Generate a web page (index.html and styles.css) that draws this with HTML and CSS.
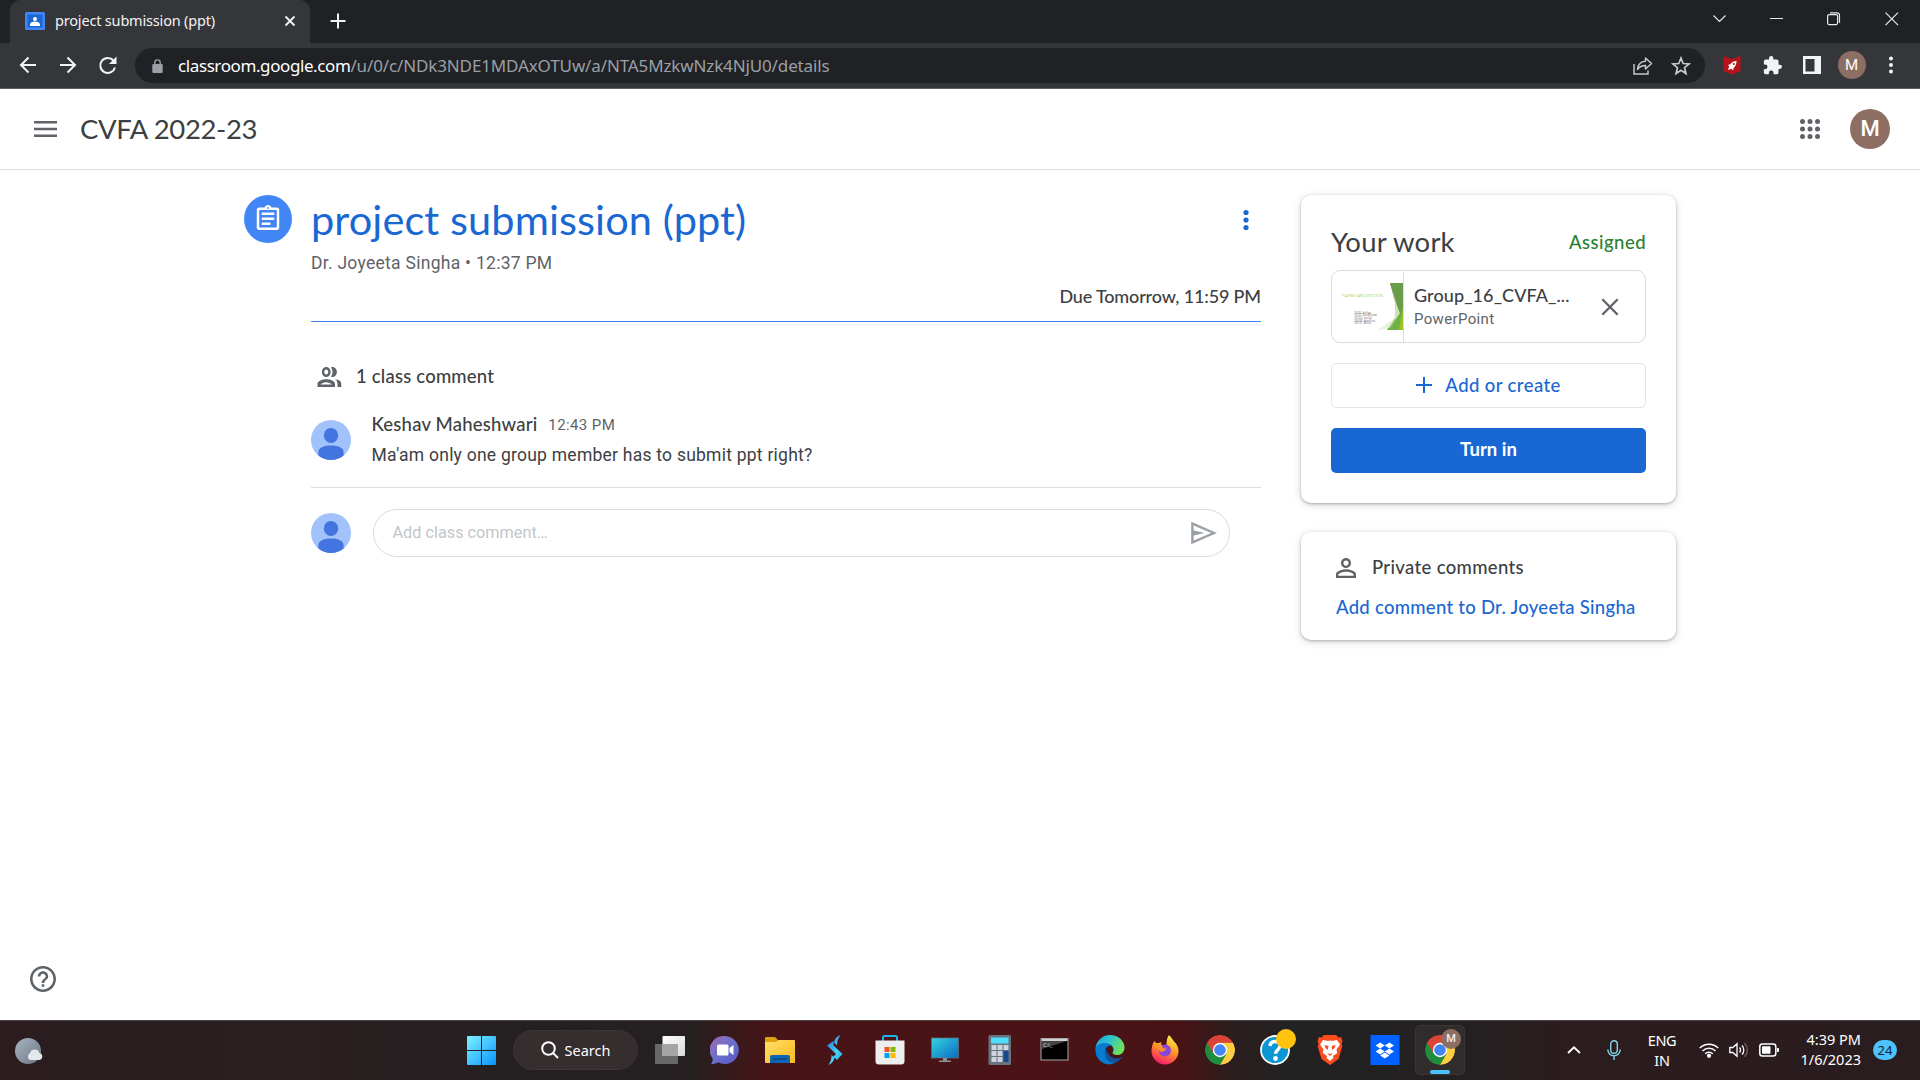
FILE: index.html
```html
<!DOCTYPE html>
<html lang="en">
<head>
<meta charset="utf-8">
<title>project submission (ppt)</title>
<link rel="stylesheet" href="styles.css">
</head>
<body>
<svg class="defs" width="0" height="0" aria-hidden="true">
  <defs>
    <symbol id="person" viewBox="0 0 40 40"><circle cx="20" cy="20" r="20" fill="#a1c2fa"/><ellipse cx="20" cy="15.4" rx="7.2" ry="7.5" fill="#4374e0"/><path d="M7.4 35.5V32c0-4.600 6.500-6.500 12.600-6.500s12.600 1.900 12.600 6.500v3.500A20 20 0 0 1 20 40 20 20 0 0 1 7.400 35.500z" fill="#4374e0"/></symbol>
    <symbol id="chrome" viewBox="0 0 48 48"><path d="M3.200 12A24 24 0 0 1 44.800 12H24z" fill="#db4437"/><path d="M3.200 12A24 24 0 0 0 24 48L34.400 30 24 24z" fill="#1e8e3e"/><path d="M44.800 12A24 24 0 0 1 24 48L34.400 30 24 12z" fill="#ffcd40"/><path d="M3.200 12L13.600 30 24 12H44.800L42 8 24 0 8 6z" fill="#db4437"/><circle cx="24" cy="24" r="11.500" fill="#fff"/><circle cx="24" cy="24" r="9.300" fill="#4285f4"/></symbol>
    <clipPath id="disc"><circle cx="24" cy="24" r="24"/></clipPath>
    <linearGradient id="gwin" x1="0" y1="0" x2="1" y2="1"><stop offset="0" stop-color="#7df2ff"/><stop offset="1" stop-color="#0a93fb"/></linearGradient>
    <linearGradient id="gchat" x1="0" y1="0" x2="1" y2="1"><stop offset="0" stop-color="#a16bb0"/><stop offset=".5" stop-color="#6b6fcf"/><stop offset="1" stop-color="#5558c4"/></linearGradient>
    <linearGradient id="gfold" x1="0" y1="0" x2="1" y2="1"><stop offset="0" stop-color="#ffdf6b"/><stop offset="1" stop-color="#fbb91a"/></linearGradient>
    <linearGradient id="gbolt" x1="0" y1="0" x2="1" y2="1"><stop offset="0" stop-color="#2f6fe4"/><stop offset=".6" stop-color="#42d4f4"/><stop offset="1" stop-color="#2f8fe0"/></linearGradient>
    <linearGradient id="gmon" x1="0" y1="0" x2="1" y2="1"><stop offset="0" stop-color="#35d2e0"/><stop offset="1" stop-color="#0a6cc4"/></linearGradient>
    <linearGradient id="gedge" x1="0" y1="0" x2="1" y2=".4"><stop offset="0" stop-color="#1ba0df"/><stop offset=".5" stop-color="#2cc3d2"/><stop offset="1" stop-color="#6be25a"/></linearGradient>
    <linearGradient id="gfox" x1=".7" y1="0" x2=".3" y2="1"><stop offset="0" stop-color="#fff14a"/><stop offset=".45" stop-color="#ff9a26"/><stop offset="1" stop-color="#f5156c"/></linearGradient>
    <linearGradient id="gtv" x1="0" y1="0" x2="1" y2="1"><stop offset="0" stop-color="#fff"/><stop offset="1" stop-color="#d9d9d9"/></linearGradient>
    <linearGradient id="gmoon" x1="0" y1="0" x2="1" y2="1"><stop offset="0" stop-color="#a9b4c2"/><stop offset="1" stop-color="#6c7683"/></linearGradient>
  </defs>
</svg>

<header class="browser">
  <div class="tabstrip">
    <div class="tab">
      <svg class="favicon" viewBox="0 0 20 18"><rect width="20" height="18" rx="1.500" fill="#4285f4"/><rect x="2.500" y="2.500" width="15" height="13" fill="#1967d2"/><circle cx="10" cy="7" r="2" fill="#fff"/><path d="M5 14v-1.500c0-2 2.500-3 5-3s5 1 5 3V14z" fill="#fff"/></svg>
      <span class="tab-title">project submission (ppt)</span>
      <svg class="tab-close" viewBox="0 0 12 12"><path d="M1.500 1.500l9 9M10.500 1.500l-9 9" stroke="#f1f3f4" stroke-width="1.900"/></svg>
    </div>
    <svg class="new-tab" viewBox="0 0 16 16"><path d="M8 .5v15M.5 8h15" stroke="#f1f3f4" stroke-width="2"/></svg>
    <svg class="window-buttons" viewBox="0 0 186 14" fill="none" stroke="#e8eaed" stroke-width="1.200"><path d="M.5 3.500l6 6 6-6M57 6.500h13"/><rect x="114.600" y="2.600" width="10" height="10" rx="1.500"/><path d="M117 .8h7a2.500 2.500 0 0 1 2.500 2.500v7.500M172.500.6l12.500 12.500M185 .6L172.500 13.100"/></svg>
  </div>
  <div class="toolbar">
    <svg class="nav" viewBox="0 0 98 20" fill="none" stroke="#f1f3f4" stroke-width="2"><path d="M17 10H2M9.500 2.500L2 10l7.500 7.500M41 10h15M48.500 2.500L56 10l-7.500 7.500M94.500 5.500A7.500 7.500 0 1 0 96 12.500"/><path d="M97.500 1.500v7.500H90z" fill="#f1f3f4" stroke="none"/></svg>
    <div class="omnibox">
      <svg class="lock" viewBox="0 0 11 14"><rect x=".3" y="5" width="10.400" height="9" rx="1.200" fill="#9aa0a6"/><path d="M2.800 5.500V3.600a2.700 2.700 0 0 1 5.400 0v1.900" fill="none" stroke="#9aa0a6" stroke-width="1.400"/></svg>
      <span class="url"><span class="host">classroom.google.com</span><span class="path">/u/0/c/NDk3NDE1MDAxOTUw/a/NTA5MzkwNzk4NjU0/details</span></span>
      <svg class="share" viewBox="0 0 20 20" fill="none" stroke="#c4c7c5" stroke-width="1.500"><path d="M1 8v10h14v-3.500"/><path d="M4.500 13.500c.5-5 3.500-8 8-8.200V2l6 5.500-6 5.500V9.500c-3.500 0-6 1.200-8 4z" stroke-linejoin="round"/></svg>
      <svg class="star" viewBox="0 0 20 20"><path d="M10 2l2.200 5.500 5.900.4-4.600 3.800 1.500 5.800L10 14.300l-5 3.200 1.500-5.800L1.900 7.900l5.900-.4z" fill="none" stroke="#c8cacc" stroke-width="1.700"/></svg>
    </div>
    <div class="extensions">
      <svg width="18" height="20" viewBox="0 0 18 20"><path d="M.5 1L9 4l8.500-3v15L9 19.500.5 16z" fill="#b71319"/><path d="M13.500 6c-3 .2-5 1.500-6 3.300l-2.700.7 1.500 1.300L5 15l3.500-1.300L10 15.500l.7-2.700c1.600-1.300 2.800-3.300 2.800-6.800z" fill="#fff"/><circle cx="10.800" cy="9" r="1" fill="#b71319"/></svg>
      <svg width="19" height="19" viewBox="1 1 22 22"><path d="M20.500 11H19V7a2 2 0 0 0-2-2h-4V3.500a2.500 2.500 0 0 0-5 0V5H4a2 2 0 0 0-2 2v3.800h1.500a2.700 2.700 0 0 1 0 5.400H2V20a2 2 0 0 0 2 2h3.800v-1.500a2.700 2.700 0 0 1 5.400 0V22H17a2 2 0 0 0 2-2v-4h1.500a2.500 2.500 0 0 0 0-5z" fill="#f1f3f4"/></svg>
      <svg width="18" height="18" viewBox="0 0 18 18"><path fill="#f1f3f4" fill-rule="evenodd" d="M0 0h18v18H0zM2.500 3v12.500H11.500V3z"/></svg>
      <span class="avatar small">M</span>
      <svg width="4" height="18" viewBox="0 0 4 18" fill="#f1f3f4"><circle cx="2" cy="2.500" r="2"/><circle cx="2" cy="9" r="2"/><circle cx="2" cy="15.500" r="2"/></svg>
    </div>
  </div>
</header>

<nav class="appbar">
  <svg class="menu" viewBox="0 0 23 16"><path d="M0 1.200h23M0 8h23M0 14.800h23" stroke="#5f6368" stroke-width="2.400"/></svg>
  <span class="course">CVFA 2022-23</span>
  <svg class="apps" viewBox="0 0 20 20" fill="#5f6368"><circle cx="2.500" cy="2.500" r="2.500"/><circle cx="10" cy="2.500" r="2.500"/><circle cx="17.500" cy="2.500" r="2.500"/><circle cx="2.500" cy="10" r="2.500"/><circle cx="10" cy="10" r="2.500"/><circle cx="17.500" cy="10" r="2.500"/><circle cx="2.500" cy="17.500" r="2.500"/><circle cx="10" cy="17.500" r="2.500"/><circle cx="17.500" cy="17.500" r="2.500"/></svg>
  <span class="avatar">M</span>
</nav>

<main class="page">
  <svg class="badge" viewBox="0 0 48 48"><circle cx="24" cy="24" r="24" fill="#4285f4"/><path transform="translate(9 8.700) scale(1.250)" d="M7 15h7v2H7zm0-4h10v2H7zm0-4h10v2H7zm12-4h-4.180C14.400 1.840 13.300 1 12 1c-1.300 0-2.400.84-2.820 2H5c-.14 0-.27.010-.4.040-.39.080-.74.280-1.010.55-.18.180-.33.400-.43.640-.1.230-.16.490-.16.770v14c0 .27.060.54.160.78s.25.450.43.640c.27.270.62.470 1.010.55.130.020.26.030.4.030h14c1.100 0 2-.9 2-2V5c0-1.100-.9-2-2-2zm-7-.25c.41 0 .75.340.75.750s-.34.750-.75.750-.75-.34-.75-.75.340-.75.750-.75zM19 19H5V5h14v14z" fill="#fff"/></svg>
  <section class="assignment">
    <div class="title-row">
      <h1>project submission (ppt)</h1>
      <svg width="6" height="22" viewBox="0 0 6 22" fill="#1967d2"><circle cx="3" cy="3.500" r="2.600"/><circle cx="3" cy="11" r="2.600"/><circle cx="3" cy="18.500" r="2.600"/></svg>
    </div>
    <div class="byline">Dr. Joyeeta Singha • 12:37 PM</div>
    <div class="due">Due Tomorrow, 11:59 PM</div>
    <div class="comment-head">
      <svg width="30" height="30" viewBox="0 0 24 24" fill="#5f6368"><path d="M9 13.750c-2.340 0-7 1.170-7 3.500V20h14v-2.750c0-2.330-4.660-3.500-7-3.500zM4.340 18c.84-.58 2.870-1.750 4.660-1.750s3.820 1.170 4.660 1.750H4.340zM9 12c1.930 0 3.500-1.800 3.500-4S10.930 4 9 4 5.500 5.800 5.500 8s1.570 4 3.500 4zm0-6c.9 0 1.600.9 1.600 2s-.7 2-1.600 2-1.600-.9-1.600-2S8.100 6 9 6zm7.040 7.810c1.160.84 1.960 1.960 1.960 3.440V20h3v-2.750c0-2.020-2.500-3.170-4.960-3.440zM14 12c1.930 0 3.500-1.800 3.500-4S15.930 4 14 4c-.4 0-.9.100-1.200.300C13.600 5.400 14 6.600 14 8s-.4 2.600-1.200 3.700c.3.200.8.300 1.200.300z"/></svg>
      <span class="label">1 class comment</span>
    </div>
    <div class="comment">
      <svg width="40" height="40"><use href="#person"/></svg>
      <div class="comment-text">
        <div class="who"><span class="label">Keshav Maheshwari</span><span class="time">12:43 PM</span></div>
        <div class="message">Ma'am only one group member has to submit ppt right?</div>
      </div>
    </div>
    <div class="composer">
      <svg width="40" height="40"><use href="#person"/></svg>
      <div class="field"><span class="hint">Add class comment…</span>
        <svg width="26" height="22" viewBox="0 0 26 22"><path d="M1.400 1.600L23 11 1.400 20.400z" fill="none" stroke="#9aa0a6" stroke-width="2.400"/><path d="M2 8.300L13.500 11 2 13.700z" fill="#9aa0a6"/></svg>
      </div>
    </div>
  </section>
  <aside class="side">
    <div class="card work">
      <div class="work-head"><span class="work-title">Your work</span><span class="status">Assigned</span></div>
      <div class="file">
        <div class="thumb"><svg width="62" height="47" viewBox="0 0 62 47"><path d="M49 0h13v47H46l11-17z" fill="#70a14f"/><path d="M49 0l10 31-5 7V20z" fill="#c5dd9f"/><path d="M49 0h13v22l-3 9z" fill="#6a9c49"/><path d="M46 47l13-17 3 3v14z" fill="#6fb245"/><path d="M62 25v22h-4z" fill="#9bc41f"/><path d="M36 47l17-11 2-14 4 8-10 15z" fill="#dbe9c4" opacity=".6"/><text x="1" y="14" font-size="4.200" textLength="41" lengthAdjust="spacingAndGlyphs" fill="#93d15a">PLAYING CARD DETECTION</text><g font-size="2.600" fill="#555"><text x="13" y="30.500" textLength="17" lengthAdjust="spacingAndGlyphs">19UCC001 - Aditi Gupta</text><text x="13" y="33.200" textLength="23" lengthAdjust="spacingAndGlyphs">19UCC023 - Keshav Maheshwari</text><text x="13" y="35.900" textLength="18" lengthAdjust="spacingAndGlyphs">19UCC054 - Tanya Sethi</text><text x="13" y="38.600" textLength="21" lengthAdjust="spacingAndGlyphs">19UEC066 - Aman Meena</text><text x="13" y="41.300" textLength="17" lengthAdjust="spacingAndGlyphs">19UCC101 - Rahul Jain</text></g></svg></div>
        <div class="file-text"><span class="file-name">Group_16_CVFA_...</span><span class="file-type">PowerPoint</span></div>
        <svg class="remove" width="18" height="18" viewBox="0 0 18 18"><path d="M1.300 1.300l15.400 15.400M16.700 1.300L1.300 16.700" stroke="#5f6368" stroke-width="2.300"/></svg>
      </div>
      <div class="button outline"><svg width="16" height="16" viewBox="0 0 16 16"><path d="M8 0v16M0 8h16" stroke="#1967d2" stroke-width="2"/></svg><span>Add or create</span></div>
      <div class="button primary"><span>Turn in</span></div>
    </div>
    <div class="card private">
      <div class="private-head"><svg width="20" height="20" viewBox="4 4 16 16" fill="#5f6368"><path d="M12 5.900c1.160 0 2.100.940 2.100 2.100s-.94 2.100-2.100 2.100S9.900 9.160 9.900 8s.94-2.100 2.100-2.100m0 9c2.970 0 6.100 1.460 6.100 2.100v1.100H5.900V17c0-.64 3.130-2.100 6.100-2.100M12 4C9.790 4 8 5.790 8 8s1.790 4 4 4 4-1.790 4-4-1.790-4-4-4zm0 9c-2.670 0-8 1.340-8 4v3h16v-3c0-2.660-5.330-4-8-4z"/></svg><span class="label">Private comments</span></div>
      <div class="private-link">Add comment to Dr. Joyeeta Singha</div>
    </div>
  </aside>
</main>

<div class="help"><svg width="26" height="26" viewBox="2 2 20 20" fill="#5f6368"><path d="M11 18h2v-2h-2v2zm1-16C6.480 2 2 6.480 2 12s4.480 10 10 10 10-4.480 10-10S17.520 2 12 2zm0 18c-4.410 0-8-3.590-8-8s3.590-8 8-8 8 3.590 8 8-3.590 8-8 8zm0-14c-2.210 0-4 1.790-4 4h2c0-1.100.9-2 2-2s2 .9 2 2c0 2-3 1.750-3 5h2c0-2.250 3-2.500 3-5 0-2.210-1.790-4-4-4z"/></svg></div>

<footer class="taskbar">
  <svg class="weather" viewBox="0 0 28 26"><circle cx="13" cy="13" r="13" fill="url(#gmoon)"/><path d="M15 22a4 4 0 0 1 0-7 5 5 0 0 1 9.500 0 3.600 3.600 0 0 1 0 7z" fill="#e4e8ed"/></svg>
  <div class="launchers">
    <svg class="start" viewBox="0 0 29 29"><path d="M1 0h13v14H0V1a1 1 0 0 1 1-1zM15 0h13a1 1 0 0 1 1 1v13H15zM0 15h14v14H1a1 1 0 0 1-1-1zM15 15h14v13a1 1 0 0 1-1 1H15z" fill="url(#gwin)"/></svg>
    <div class="search"><svg width="18" height="18" viewBox="0 0 18 18" fill="none" stroke="#fff" stroke-width="2"><circle cx="7.500" cy="7.500" r="6.300"/><path d="M12 12l5 5"/></svg><span class="search-text">Search</span></div>
    <div class="slot"><svg viewBox="0 0 30 30"><rect y="9" width="23" height="20" rx="1" fill="#686868"/><rect x="7.500" y="1" width="22.500" height="20" rx="1" fill="url(#gtv)"/><path d="M7.500 9H23v12H7.500z" fill="#a5a5a5"/></svg></div>
    <div class="slot"><svg viewBox="0 0 30 30"><path d="M15 1a14 14 0 1 1-6.500 26.500C6.500 28.500 3 29.200 1 29c1-1.500 1.800-3 1.700-5.500A14 14 0 0 1 15 1z" fill="url(#gchat)"/><rect x="7" y="9.500" width="11.500" height="11" rx="1.500" fill="#fff"/><path d="M19.500 13l4-3v10l-4-3z" fill="#fff"/></svg></div>
    <div class="slot"><svg viewBox="0 0 30 30"><path d="M0 3a1 1 0 0 1 1-1h9l3 3v4H0z" fill="#dfa010"/><path d="M0 7h11l2.500-2H29a1 1 0 0 1 1 1v22H1a1 1 0 0 1-1-1z" fill="url(#gfold)"/><path d="M5 28v-6a2 2 0 0 1 2-2h16a2 2 0 0 1 2 2v6z" fill="#0c66b5"/><path d="M8 24h14" stroke="#0a3f78" stroke-width="1.300"/></svg></div>
    <div class="slot"><svg viewBox="0 0 30 30"><path d="M20.500 0c-4 1.500-6 4-6.500 7.500l3 3c0-4 1-7 3.500-10.500zM7 10.500l6.500-4.500v4.500L22.500 19 17 25l-3.500-3.500L16 19zM8.500 30c4-2 5.500-4.500 6-7.500l-3-2.500c0 4-.8 6.500-3 10z" fill="url(#gbolt)"/></svg></div>
    <div class="slot"><svg viewBox="0 0 30 30"><path d="M8 7V2.500A1.500 1.500 0 0 1 9.500 1h11A1.500 1.500 0 0 1 22 2.500V7" fill="none" stroke="#20b0ea" stroke-width="2"/><path d="M.5 5.500h29V26a3.500 3.500 0 0 1-3.500 3.500H4A3.500 3.500 0 0 1 .5 26z" fill="#eee"/><path d="M9.500 12h5v5h-5z" fill="#f25022"/><path d="M15.500 12h5v5h-5z" fill="#7fba00"/><path d="M9.500 18h5v5h-5z" fill="#00a4ef"/><path d="M15.500 18h5v5h-5z" fill="#ffb900"/></svg></div>
    <div class="slot"><svg viewBox="0 0 30 30"><rect x="1.500" y="3" width="27" height="20" fill="url(#gmon)" stroke="#5f6f78" stroke-width=".8"/><path d="M13 23h4v2.500h4V27H9v-1.500h4z" fill="#8c9296"/></svg></div>
    <div class="slot"><svg viewBox="0 0 30 30"><rect x="3.500" width="22.500" height="30" rx="1.500" fill="#68737f"/><rect x="6" y="2.500" width="17.500" height="6" fill="#4fdcf8"/><path d="M6.500 10h5v5h-5zm6 0h5v5h-5zm6 0h5v5h-5zm-12 6h5v5h-5zm6 0h5v5h-5zm-6 6h5v5h-5zm6 0h5v5h-5z" fill="#cbd4de"/><path d="M18.500 16h5v11h-5z" fill="#174a8c"/></svg></div>
    <div class="slot"><svg viewBox="0 0 30 30"><rect x="1" y="3.500" width="27" height="21.500" fill="#000" stroke="#a9a9a9"/><path d="M1.500 4h26v2h-26z" fill="#d0d0d0"/><path d="M2 6h25L2 14z" fill="#444"/><text x="3" y="11.500" font-size="5.500" fill="#ddd">C:\_</text></svg></div>
    <div class="slot"><svg viewBox="0 0 30 30"><path d="M.5 15A14.500 14.500 0 0 1 15 0c8.500 0 14.500 6 14.500 12.500 0 5-3.500 7.500-7.500 7.500-3 0-4.500-1-4.500-2.200 0-.8 1-1.200 1-3 0-3.300-3-6-7-6-5.500 0-11 3-11 6.200z" fill="url(#gedge)"/><path d="M.5 15C.5 10.500 5 8 9.500 8c3 0 5.500 1.200 7 3-3.500-1-6 1.500-6 5 0 6 5.500 10.500 10.500 11-2 1.500-4.500 2.500-7 2.500A14 14 0 0 1 .5 15z" fill="#087cd0"/><path d="M10.800 13C8 20 12 29 20 27.500c3-.6 5.500-2.500 7.500-5.500-6 3-14.500 1.500-16.700-9z" fill="#12529f"/></svg></div>
    <div class="slot"><svg viewBox="0 0 30 30"><path d="M19 0c3 3 3.500 4.500 5 6.500 3 2.500 4.500 6 4.500 9.500A13.500 13.500 0 0 1 15 29.500 13.500 13.500 0 0 1 1.500 16c0-4 1-7.500 3-10l1.500 2c2 .2 3.500.2 5.500-1-1 2.500 0 3.500 2 4l3-1c0-4 .5-7.500 2.500-10z" fill="url(#gfox)"/><circle cx="15" cy="15.500" r="6" fill="#8a45dc"/><path d="M5 12c3-2.500 5-2 7-1 .5 2 2 2.500 4.500 2.500-.5 2-3 2-4 3.500-2 0-3-1-3.500-2.500-1.500-.5-2.500-1.500-4-2.500z" fill="#ff9326"/></svg></div>
    <div class="slot"><svg viewBox="0 0 48 48"><g clip-path="url(#disc)"><use href="#chrome"/></g></svg></div>
    <div class="slot helpapp"><svg viewBox="0 0 30 30"><circle cx="15" cy="15" r="14" fill="#0a95d5" stroke="#fff" stroke-width="1.800"/><path d="M10 11c.3-3 2.300-4.500 5-4.500s5 1.600 5 4.300c0 4-4.500 3.800-4.500 8" fill="none" stroke="#fff" stroke-width="3.400"/><circle cx="15.500" cy="23.500" r="2.400" fill="#fff"/></svg><i class="dot"></i></div>
    <div class="slot"><svg viewBox="0 0 30 30"><path d="M9 0h12l2.500 2.500L26 2l1.500 4-1 3 .8 2.500-3.800 12.500L15 30l-8.500-6L2.700 11.500 3.500 9l-1-3L4 2l2.500.5z" fill="#fb4b1d"/><path d="M8 5l4 .8h6l4-.8 3 4.500-3.500 5 .8 3.500-4.300 3 .5 2L15 26l-3.500-3 .5-2-4.300-3 .8-3.500-3.500-5z" fill="#fff"/><path d="M9.500 10l4 1-.8 4-2.200-2zM20.500 10l-4 1 .8 4 2.200-2zM12 18l3 1 3-1-3 3z" fill="#fb4b1d"/></svg></div>
    <div class="slot"><svg viewBox="0 0 30 30"><rect x=".5" width="29" height="30" fill="#0061fe"/><path d="M10.200 7.500l4.600 3-4.600 3-4.600-3zM19.400 7.500l4.600 3-4.600 3-4.600-3zM10.200 13.500l4.600 3-4.600 3-4.600-3zM19.400 13.500l4.600 3-4.600 3-4.600-3zM14.800 17.500l4.600 3-4.600 3-4.600-3z" fill="#fff"/></svg></div>
    <div class="slot active"><svg viewBox="0 0 48 48"><g clip-path="url(#disc)"><use href="#chrome"/></g></svg><span class="profile">M</span><i class="running"></i></div>
  </div>
  <div class="tray">
    <svg class="up" viewBox="0 0 14 8"><path d="M1 7l6-5.600L13 7" fill="none" stroke="#fff" stroke-width="1.900"/></svg>
    <svg class="mic" viewBox="0 0 14 20" fill="none" stroke="#7fd3e6" stroke-width="1.400"><rect x="3.700" y=".8" width="6.600" height="12.500" rx="3.300"/><path d="M.8 9.500a6.200 6.200 0 0 0 12.400 0M7 16v4"/></svg>
    <div class="lang"><span>ENG</span><span>IN</span></div>
    <svg class="wifi" viewBox="0 0 20 16" fill="none" stroke="#fff" stroke-width="1.500"><path d="M.8 6a13 13 0 0 1 18.400 0M3.500 9a9.200 9.200 0 0 1 13 0M6.200 11.800a5.400 5.400 0 0 1 7.600 0"/><circle cx="10" cy="13.800" r="1.400" fill="#fff"/></svg>
    <svg class="vol" viewBox="0 0 20 16" fill="none" stroke="#fff" stroke-width="1.300"><path d="M.8 5.500h3L8 1.800v12.400L3.800 10.500h-3zM10.500 5.500a3.500 3.500 0 0 1 0 5M13 3.500a6.500 6.500 0 0 1 0 9"/><path d="M15.500 1.200a9.500 9.500 0 0 1 0 13.600" stroke="#6b6264"/></svg>
    <svg class="battery" viewBox="0 0 20 14"><rect x=".8" y="1" width="16" height="12" rx="2.500" fill="none" stroke="#fff" stroke-width="1.500"/><rect x="3" y="3.200" width="8.500" height="7.600" rx=".8" fill="#fff"/><path d="M18 5h1a1 1 0 0 1 1 1v2a1 1 0 0 1-1 1h-1z" fill="#fff"/></svg>
    <div class="clock"><span>4:39 PM</span><span>1/6/2023</span></div>
    <span class="notify">24</span>
  </div>
</footer>
</body>
</html>
```
FILE: styles.css
```css
* { box-sizing: border-box; }
body { margin: 0; width: 1920px; height: 1080px; overflow: hidden; display: flex; flex-direction: column; background: #fff; color: #3c4043; font: 17.5px/24px Roboto, sans-serif; }
svg { display: block; flex: none; }
.defs { position: absolute; }
span { white-space: nowrap; }

/* Browser chrome */
.browser { flex: none; height: 89px; background: #35363a; border-bottom: 1px solid #5f6063; font-family: "Noto Sans", sans-serif; }
.tabstrip { height: 43px; background: #202124; display: flex; align-items: flex-start; padding-left: 10px; }
.tab { width: 300px; height: 43px; background: #35363a; border-radius: 10px 10px 0 0; display: flex; align-items: center; padding: 0 14px 1px 15px; }
.favicon { width: 20px; height: 18px; margin-right: 10px; }
.tab-title { flex: 1; color: #f1f3f4; font-size: 14.5px; line-height: 20px; letter-spacing: -.18px; padding-bottom: 2px; }
.tab-close { width: 12px; height: 12px; }
.new-tab { width: 16px; height: 16px; margin: 13px 0 0 19.5px; }
.window-buttons { width: 186px; height: 14px; margin: 12px 21px 0 auto; }
.toolbar { height: 45px; display: flex; align-items: center; padding-left: 18.5px; }
.nav { width: 98px; height: 20px; margin: 0 18.5px 1px 0; }
.omnibox { flex: none; width: 1570px; height: 35px; border-radius: 18px; background: #202124; display: flex; align-items: center; padding: 0 14px 0 17px; }
.lock { width: 11px; height: 14px; margin-right: 15px; }
.url { flex: 1; font-size: 17px; display: flex; }
.host { color: #fff; letter-spacing: -.4px; }
.path { color: #9aa0a6; letter-spacing: -.13px; }
.share { width: 20px; height: 20px; margin-right: 18px; }
.star { width: 20px; height: 20px; }
.extensions { flex: 1; display: flex; align-items: center; gap: 21.5px; padding: 0 0 1px 18px; }
.extensions .avatar { margin: 0 2px 0 -5px; }
.avatar { flex: none; width: 40px; height: 40px; border-radius: 50%; background: #8d6e63; color: #fff; display: flex; align-items: center; justify-content: center; font: 500 22px/40px Roboto, sans-serif; }
.avatar.small { width: 28px; height: 28px; font: 400 15px/28px Roboto, sans-serif; }

/* Classroom header */
.appbar { flex: none; height: 81px; border-bottom: 1px solid #dcdee0; display: flex; align-items: center; padding: 0 30px 0 33.5px; }
.menu { width: 23px; height: 16px; margin-right: 23.5px; }
.course { flex: 1; font: 27.500px/36px Lato, sans-serif; letter-spacing: -.38px; }
.apps { width: 20px; height: 20px; margin-right: 30px; }

/* Assignment */
.page { flex: 1; display: grid; grid-template-columns: 48px 950px 375px; column-gap: 19px; padding: 25px 0 0 244px; align-content: start; }
.badge { width: 48px; height: 48px; }
.side { margin-left: 21px; width: 375px; }
.title-row { display: flex; align-items: center; justify-content: space-between; height: 50px; padding-right: 12px; }
h1 { margin: 0; padding-bottom: 2px; font: 400 41.5px/50px Lato, sans-serif; letter-spacing: .1px; color: #1967d2; }
.byline { color: #5f6368; height: 39px; padding-top: 6px; letter-spacing: .28px; }
.due { height: 38px; text-align: right; border-bottom: 1px solid #4285f4; font: 500 18px/24px Lato, sans-serif; letter-spacing: -.15px; }
.comment-head { display: flex; align-items: center; gap: 11px; height: 30px; margin: 40px 0 13px; padding-left: 4px; }
.label { font: 500 18.5px/24px Lato, sans-serif; letter-spacing: .2px; padding-bottom: 2px; }
.comment { display: flex; gap: 20.5px; height: 83px; border-bottom: 1px solid #dadce0; }
.comment > svg { margin-top: 15px; }
.who { display: flex; align-items: center; gap: 11px; height: 24px; margin-top: 7px; }
.who .label { padding-bottom: 0; }
.time { font-size: 15px; letter-spacing: .4px; color: #5f6368; padding-top: 1px; }
.message { margin-top: 7px; letter-spacing: .24px; }
.composer { display: flex; align-items: center; gap: 22px; margin-top: 21px; }
.field { width: 857px; height: 48px; border: 1px solid #dadce0; border-radius: 24px; display: flex; align-items: center; justify-content: space-between; padding: 0 12px 0 18.5px; }
.hint { font-size: 16.250px; color: #c3c6c9; }

/* Side cards */
.card { background: #fff; border-radius: 10px; box-shadow: 0 1px 3px rgba(60,64,67,.35), 0 2px 8px rgba(60,64,67,.18); }
.work { height: 308px; padding: 29px 30px 30px; }
.work-head { display: flex; justify-content: space-between; align-items: center; height: 36px; margin-bottom: 10px; }
.work-title { font: 27.500px/36px Lato, sans-serif; letter-spacing: .2px; }
.status { font: 500 18.5px/24px Lato, sans-serif; letter-spacing: .45px; color: #2a8031; padding-bottom: 1px; }
.file { height: 73px; border: 1px solid #dadce0; border-radius: 9px; display: flex; align-items: center; padding-right: 26px; }
.thumb { width: 72px; height: 70px; border-right: 1px solid #dadce0; display: flex; align-items: center; justify-content: flex-end; font-family: "Open Sans", sans-serif; }
.file-text { flex: 1; display: flex; flex-direction: column; padding: 0 0 1px 10px; }
.file-name { font: 500 18px/23px Lato, sans-serif; letter-spacing: .1px; padding-bottom: 2px; }
.file-type { font-size: 15px; line-height: 20px; letter-spacing: .35px; color: #5f6368; }
.button { height: 45px; margin-top: 20px; padding-bottom: 3px; border-radius: 5px; display: flex; align-items: center; justify-content: center; font: 500 18.5px/24px Lato, sans-serif; }
.outline { border: 1px solid #e3e5e8; color: #1967d2; gap: 13px; padding-bottom: 2px; letter-spacing: .4px; }
.primary { background: #1967d2; color: #fff; font-weight: 700; }
.private { height: 108px; margin-top: 29px; padding: 24px 35px; }
.private-head { display: flex; align-items: center; gap: 16px; height: 24px; }
.private-head .label { letter-spacing: .34px; }
.private-link { margin-top: 15px; color: #1967d2; font: 500 18.5px/24px Lato, sans-serif; letter-spacing: .27px; white-space: nowrap; }

.help { flex: none; height: 54px; padding-left: 30px; }

/* Windows taskbar */
.taskbar { flex: none; height: 60px; border-top: 1px solid #4a4243; display: flex; align-items: center; color: #fff; font: 15px/20px "Noto Sans", sans-serif; background: linear-gradient(90deg, #2b1d1f 0, #2a1f21 300px, #242021 540px, #251f20 690px, #471417 770px, #4b1315 1000px, #491315 1180px, #2c1d1e 1230px, #222 1290px, #232021 1460px, #2b1c1e 1560px, #2a1d1f 100%); }
.weather { width: 28px; height: 26px; margin-left: 15px; }
.launchers { display: flex; align-items: center; margin-left: 424px; padding-bottom: 1px; }
.start { width: 29px; height: 29px; margin-right: 17px; }
.search { width: 125px; height: 40px; border-radius: 20px; background: #352d2e; border: 1px solid #3d3536; display: flex; align-items: center; justify-content: center; gap: 6px; margin-right: 7px; }
.search-text { font-size: 14.500px; }
.slot { width: 50px; height: 50px; margin-right: 5px; display: flex; align-items: center; justify-content: center; position: relative; }
.slot svg { width: 30px; height: 30px; }
.slot.active { background: #312b2c; border: 1px solid #3b3536; border-radius: 5px; margin-right: 0; }
.dot { position: absolute; right: 4px; top: 4px; width: 20px; height: 20px; border-radius: 50%; background: #ffc20e; }
.profile { position: absolute; right: 3px; top: 3px; width: 20px; height: 20px; border-radius: 50%; background: #8d6e63; color: #eee; font: 500 11px/20px Roboto, sans-serif; text-align: center; }
.running { position: absolute; left: 14px; bottom: 0; width: 20px; height: 4px; border-radius: 2px; background: #4cc2ff; }
.tray { display: flex; align-items: center; margin-left: auto; padding: 0 23px 1px 0; }
.up { width: 14px; height: 8px; margin-right: 26px; }
.mic { width: 14px; height: 20px; margin-right: 27px; }
.lang { width: 28px; display: flex; flex-direction: column; align-items: center; margin-right: 23px; padding-bottom: 1px; font-size: 14.5px; letter-spacing: -.3px; }
.wifi { width: 20px; height: 16px; margin-right: 10px; }
.vol { width: 20px; height: 16px; margin-right: 10px; }
.battery { width: 20px; height: 14px; margin-right: 20px; }
.clock { width: 62px; display: flex; flex-direction: column; align-items: flex-end; margin-right: 12px; padding-bottom: 2px; font-size: 14.500px; }
.notify { width: 24px; height: 20px; border-radius: 10px; background: #4cc2ff; color: #10242e; font-size: 13px; line-height: 20px; text-align: center; }
```
